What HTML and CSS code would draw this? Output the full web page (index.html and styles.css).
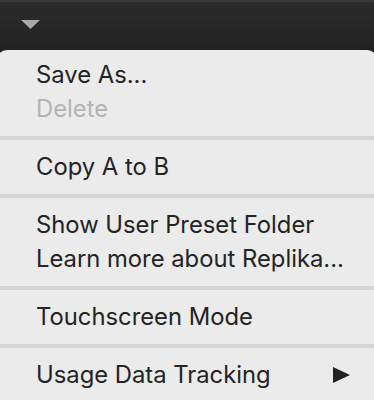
FILE: index.html
```html
<!DOCTYPE html>
<html lang="en">
<head>
    <meta charset="UTF-8">
    <meta name="viewport" content="width=device-width, initial-scale=1.0">
    <title>Preset Menu</title>
    <link rel="stylesheet" href="styles.css">
</head>
<body>
    <div class="toolbar">
        <svg class="toolbar-caret" width="19" height="9" viewBox="0 0 19 9">
            <polygon points="0,0 19,0 9.5,9" fill="#a9a9a9"/>
        </svg>
    </div>
    <div class="menu">
        <div class="menu-group">
            <div class="menu-item">Save As...</div>
            <div class="menu-item disabled">Delete</div>
        </div>
        <div class="separator"></div>
        <div class="menu-group">
            <div class="menu-item">Copy A to B</div>
        </div>
        <div class="separator"></div>
        <div class="menu-group">
            <div class="menu-item">Show User Preset Folder</div>
            <div class="menu-item">Learn more about Replika...</div>
        </div>
        <div class="separator"></div>
        <div class="menu-group">
            <div class="menu-item">Touchscreen Mode</div>
        </div>
        <div class="separator"></div>
        <div class="menu-group">
            <div class="menu-item has-submenu">
                <span>Usage Data Tracking</span>
                <svg class="submenu-arrow" width="17" height="16" viewBox="0 0 17 16">
                    <polygon points="0,0 17,8 0,16" fill="#222"/>
                </svg>
            </div>
        </div>
    </div>
</body>
</html>
```

FILE: styles.css
```css
body {
    margin: 0;
    height: 400px;
    overflow: hidden;
    background: #222;
    font-family: Inter, "Liberation Sans", sans-serif;
}

.toolbar {
    height: 48px;
    border-top: 2px solid #3a3a3a;
    background: linear-gradient(to bottom, #2c2c2c, #222);
    display: flex;
    align-items: flex-start;
}

.toolbar-caret {
    display: block;
    margin: 18px 0 0 21px;
}

.menu {
    margin: 0 -3px;
    padding: 8px 0 12px 0;
    background: #ebebeb;
    border-radius: 10px;
}

.menu-item {
    padding: 0 27px 0 39px;
    height: 34px;
    line-height: 34px;
    font-size: 23.8px;
    color: #242424;
    white-space: nowrap;
}

.menu-item.disabled {
    color: #b3b3b3;
}

.menu-item.has-submenu {
    display: flex;
    justify-content: space-between;
    align-items: center;
}

.separator {
    height: 4px;
    margin: 10px 0;
    background: #d5d5d5;
}
```
